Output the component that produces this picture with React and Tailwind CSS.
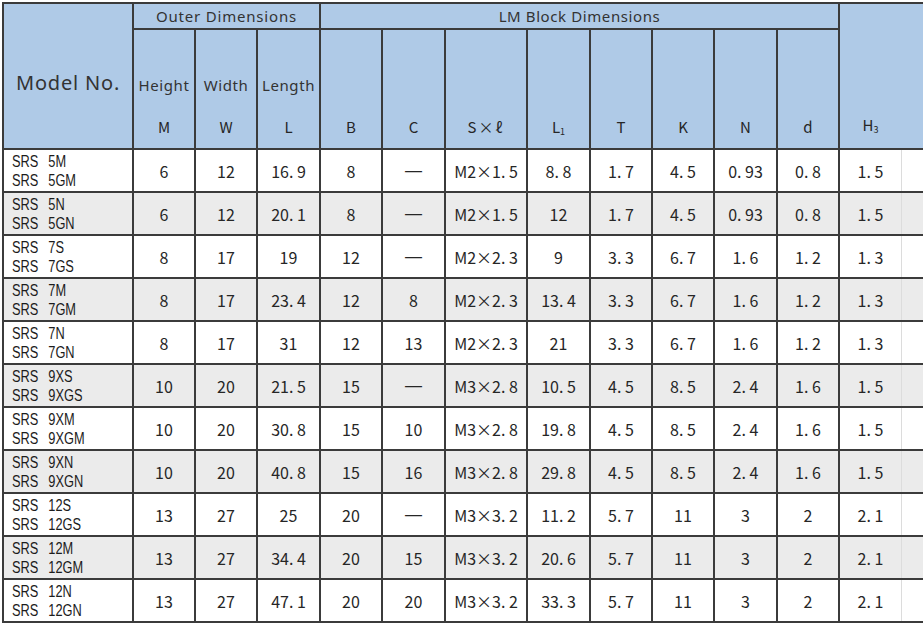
const rows = [
  ['5M', '5GM', '6', '12', '16. 9', '8', '—', 'M2×1. 5', '8. 8', '1. 7', '4. 5', '0. 93', '0. 8', '1. 5'],
  ['5N', '5GN', '6', '12', '20. 1', '8', '—', 'M2×1. 5', '12', '1. 7', '4. 5', '0. 93', '0. 8', '1. 5'],
  ['7S', '7GS', '8', '17', '19', '12', '—', 'M2×2. 3', '9', '3. 3', '6. 7', '1. 6', '1. 2', '1. 3'],
  ['7M', '7GM', '8', '17', '23. 4', '12', '8', 'M2×2. 3', '13. 4', '3. 3', '6. 7', '1. 6', '1. 2', '1. 3'],
  ['7N', '7GN', '8', '17', '31', '12', '13', 'M2×2. 3', '21', '3. 3', '6. 7', '1. 6', '1. 2', '1. 3'],
  ['9XS', '9XGS', '10', '20', '21. 5', '15', '—', 'M3×2. 8', '10. 5', '4. 5', '8. 5', '2. 4', '1. 6', '1. 5'],
  ['9XM', '9XGM', '10', '20', '30. 8', '15', '10', 'M3×2. 8', '19. 8', '4. 5', '8. 5', '2. 4', '1. 6', '1. 5'],
  ['9XN', '9XGN', '10', '20', '40. 8', '15', '16', 'M3×2. 8', '29. 8', '4. 5', '8. 5', '2. 4', '1. 6', '1. 5'],
  ['12S', '12GS', '13', '27', '25', '20', '—', 'M3×3. 2', '11. 2', '5. 7', '11', '3', '2', '2. 1'],
  ['12M', '12GM', '13', '27', '34. 4', '20', '15', 'M3×3. 2', '20. 6', '5. 7', '11', '3', '2', '2. 1'],
  ['12N', '12GN', '13', '27', '47. 1', '20', '20', 'M3×3. 2', '33. 3', '5. 7', '11', '3', '2', '2. 1'],
]

const sans = "font-['Noto_Sans',sans-serif]"
const cjk = "font-['Noto_Sans_CJK_SC','Liberation_Sans',sans-serif]"

function SubHead({ word, sym }) {
  return (
    <div className="bg-[#afcae7] relative">
      {word && (
        <div className={`absolute left-0 right-0 top-[44px] text-center text-[15px] tracking-[0.6px] text-[#333] ${sans}`}>
          {word}
        </div>
      )}
      <div className={`absolute left-0 right-0 top-[86px] text-center text-[15px] ${cjk}`}>{sym}</div>
    </div>
  )
}

export default function App() {
  return (
    <div className="w-[923px] h-[628px] overflow-hidden bg-white pl-[2px] pt-[2px] text-[#262626]">
      <div className="grid w-max bg-[#3b3b3b] gap-[2px] p-[2px] grid-cols-[128px_60px_60px_61px_60px_61px_80px_61px_60px_60px_61px_60px_140px] grid-rows-[24px_118px_repeat(11,41px)]">
        <div className={`row-span-2 bg-[#afcae7] flex items-center pl-[12px] pt-[14px] text-[20px] tracking-[0.8px] text-[#333] ${sans}`}>
          Model No.
        </div>
        <div className={`col-span-3 bg-[#afcae7] flex items-center justify-center text-[15px] tracking-[0.8px] text-[#333] ${sans}`}>
          Outer Dimensions
        </div>
        <div className={`col-span-8 bg-[#afcae7] flex items-center justify-center text-[15px] tracking-[0.6px] text-[#333] ${sans}`}>
          LM Block Dimensions
        </div>
        <div className="row-span-2 bg-[#afcae7] relative">
          <div className={`absolute left-0 w-[61px] top-[110px] text-center text-[15px] ${cjk}`}>
            H<sub className="text-[9px]">3</sub>
          </div>
        </div>
        <SubHead word="Height" sym="M" />
        <SubHead word="Width" sym="W" />
        <SubHead word="Length" sym="L" />
        <SubHead sym="B" />
        <SubHead sym="C" />
        <SubHead sym={<span className="tracking-[2px]">S×ℓ</span>} />
        <SubHead sym={<span>L<sub className="text-[9px]">1</sub></span>} />
        <SubHead sym="T" />
        <SubHead sym="K" />
        <SubHead sym="N" />
        <SubHead sym="d" />
        {rows.map((r, i) => {
          const bg = i % 2 === 1 ? 'bg-[#ebebeb]' : 'bg-white'
          return [
            <div key={`m${i}`} className={`${bg} flex items-center pl-[8px]`}>
              <div className="flex flex-col origin-left scale-x-[0.8] text-[16px] leading-[19px] [word-spacing:8px] text-[#1c1c1c] font-['Liberation_Sans',sans-serif] whitespace-nowrap">
                <span>SRS {r[0]}</span>
                <span>SRS {r[1]}</span>
              </div>
            </div>,
            ...r.slice(2, 13).map((v, j) => (
              <div key={`c${i}-${j}`} className={`${bg} flex items-center justify-center text-[16px] ${cjk}`}>
                {v === '—' ? <span className="font-['Liberation_Sans',sans-serif] text-[17px]">—</span> : v}
              </div>
            )),
            <div key={`h${i}`} className={`${bg} flex text-[16px] ${cjk}`}>
              <div className="w-[61px] flex items-center justify-center">{r[13]}</div>
              <div className="flex-1 border-l border-[#dcdcdc]" />
            </div>,
          ]
        })}
      </div>
    </div>
  )
}
